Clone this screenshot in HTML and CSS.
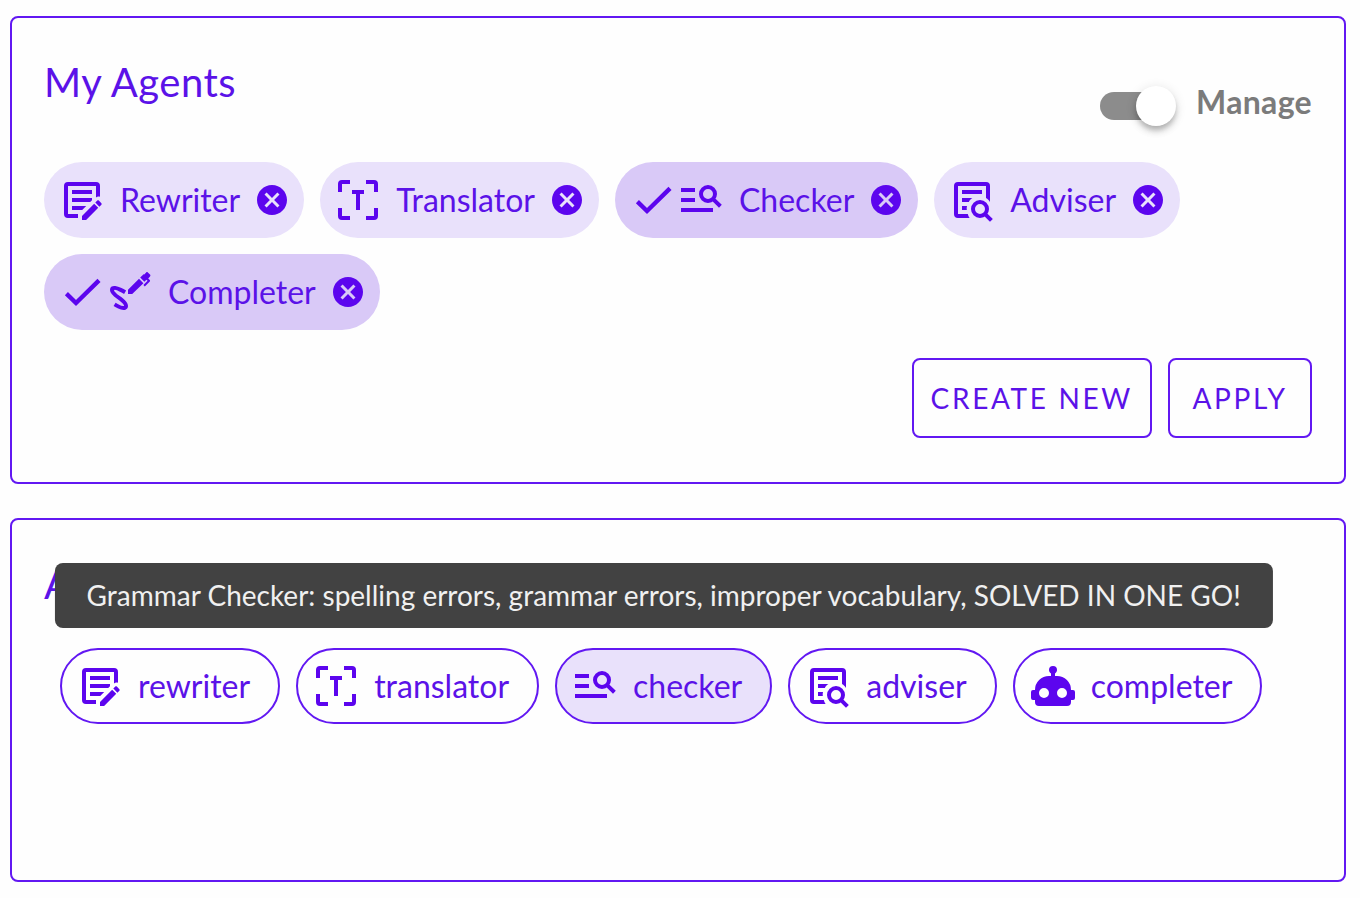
FILE: index.html
```html
<!DOCTYPE html>
<html lang="en">
<head>
<meta charset="utf-8">
<meta name="viewport" content="width=device-width, initial-scale=1">
<title>My Agents</title>
<link rel="stylesheet" href="styles.css">
</head>
<body>
<svg class="sprite" aria-hidden="true">
  <symbol id="rewrite" viewBox="0 0 24 24">
    <path fill="currentColor" d="M10 21H5a2 2 0 0 1-2-2V5a2 2 0 0 1 2-2h14a2 2 0 0 1 2 2v5.4c-.8-.3-1.5-.1-2 .4V5H5v14h5zM7 7h10v2H7zM7 11h10v1.1l-.9.9H7zM7 15h7.1l-2 2H7z"/>
    <path fill="currentColor" d="M21.7 14.35l-1 1-2.05-2.05 1-1c.21-.21.56-.21.77 0l1.28 1.28c.21.21.21.56 0 .77M12 19.94V22h2.06l6.06-6.12-2.05-2.05z"/>
  </symbol>
  <symbol id="translate" viewBox="0 0 24 24">
    <path fill="none" stroke="currentColor" stroke-width="2" d="M3 8V4a1 1 0 0 1 1-1h4M16 3h4a1 1 0 0 1 1 1v4M21 16v4a1 1 0 0 1-1 1h-4M8 21H4a1 1 0 0 1-1-1v-4M9 8h6M12 8v9"/>
  </symbol>
  <symbol id="check-text" viewBox="0 0 24 24">
    <g fill="none" stroke="currentColor" stroke-width="2">
      <path d="M2 7h7M2 12h7M2 17h16M17.8 11.3l3.9 3.8"/>
      <circle cx="15.5" cy="9" r="3.5"/>
    </g>
  </symbol>
  <symbol id="advise" viewBox="0 0 24 24">
    <path fill="currentColor" d="M10.8 21H5a2 2 0 0 1-2-2V5a2 2 0 0 1 2-2h14a2 2 0 0 1 2 2v8c-.5-.8-1.2-1.5-2-2V5H5v14h4.9c.2.8.5 1.4.9 2zM7 7h10v2H7zM7 11h5.2c-.8.5-1.4 1.2-1.8 2H7zM7 15h2.5c-.2.7-.2 1.3-.1 2H7z"/>
    <g fill="none" stroke="currentColor" stroke-width="2">
      <circle cx="16" cy="16.5" r="3.5"/>
      <path d="M18.4 18.900l3.300 3.300"/>
    </g>
  </symbol>
  <symbol id="draw" viewBox="0 0 24 24">
    <path fill="currentColor" d="M9.75 20.85c1.780-.700 1.390-2.630.490-3.850-.890-1.250-2.120-2.110-3.360-2.940C6 13.500 5.190 12.800 4.540 12c-.280-.330-.850-.940-.270-1.060.590-.120 1.610.460 2.130.680.910.380 1.810.820 2.650 1.340l1.010-1.700C8.500 10.230 6.500 9.320 4.640 9.050c-1.060-.160-2.180.060-2.540 1.210-.320.990.190 1.990.770 2.770 1.370 1.830 3.500 2.710 5.090 4.290.340.330.750.720.950 1.180.210.440.160.470-.310.470-1.240 0-2.790-.970-3.800-1.610l-1.010 1.700c1.530.940 4.090 2.410 5.960 1.790z"/>
    <path fill="currentColor" d="M11 13v-2.100l5.500-5.500 2.200 2.200L13.100 13zM17.100 4.800l1.700-1.700.3.100 1-1c.2-.2.600-.2.800 0l1.100 1.100c.3.300.3.600 0 .900l-.9 1 .8.800c.2.200.2.500 0 .7l-2.500 2.500-.7-.7 2.100-2.100-.6-.5-1 1z"/>
  </symbol>
  <symbol id="robot" viewBox="0 0 24 24">
    <path fill="currentColor" fill-rule="evenodd" d="M12 2a2 2 0 0 1 2 2c0 .74-.4 1.390-1 1.730V7h1a7 7 0 0 1 7 7h1a1 1 0 0 1 1 1v3a1 1 0 0 1-1 1h-1v1a2 2 0 0 1-2 2H5a2 2 0 0 1-2-2v-1H2a1 1 0 0 1-1-1v-3a1 1 0 0 1 1-1h1a7 7 0 0 1 7-7h1V5.730C10.400 5.390 10 4.740 10 4a2 2 0 0 1 2-2M7.500 13a2.500 2.500 0 1 0 0 5 2.500 2.500 0 0 0 0-5M16.500 13a2.500 2.500 0 1 0 0 5 2.500 2.500 0 0 0 0-5"/>
  </symbol>
  <symbol id="tick" viewBox="0 0 24 24">
    <path fill="none" stroke="currentColor" stroke-width="2.200" d="M4.200 12.800L9 17.500 20.500 6.200"/>
  </symbol>
  <symbol id="cancel" viewBox="0 0 24 24">
    <path fill="currentColor" d="M12 2C6.470 2 2 6.470 2 12s4.470 10 10 10 10-4.470 10-10S17.530 2 12 2zm5 13.590L15.590 17 12 13.410 8.410 17 7 15.590 10.590 12 7 8.410 8.410 7 12 10.590 15.590 7 17 8.410 13.410 12 17 15.590z"/>
  </symbol>
</svg>

<main class="page">
  <section class="panel">
    <header class="panel-head">
      <h2 class="title">My Agents</h2>
      <div class="manage">
        <input class="switch" type="checkbox" role="switch" id="manage" checked>
        <label class="manage-label" for="manage">Manage</label>
      </div>
    </header>
    <div class="chips">
      <div class="chip">
        <button class="chip-main" type="button"><svg class="icon"><use href="#rewrite"/></svg><span class="chip-text">Rewriter</span></button>
        <button class="remove" type="button" aria-label="Remove Rewriter"><svg class="icon-small"><use href="#cancel"/></svg></button>
      </div>
      <div class="chip">
        <button class="chip-main" type="button"><svg class="icon"><use href="#translate"/></svg><span class="chip-text">Translator</span></button>
        <button class="remove" type="button" aria-label="Remove Translator"><svg class="icon-small"><use href="#cancel"/></svg></button>
      </div>
      <div class="chip selected">
        <button class="chip-main" type="button" aria-pressed="true"><svg class="icon"><use href="#tick"/></svg><svg class="icon"><use href="#check-text"/></svg><span class="chip-text">Checker</span></button>
        <button class="remove" type="button" aria-label="Remove Checker"><svg class="icon-small"><use href="#cancel"/></svg></button>
      </div>
      <div class="chip">
        <button class="chip-main" type="button"><svg class="icon"><use href="#advise"/></svg><span class="chip-text">Adviser</span></button>
        <button class="remove" type="button" aria-label="Remove Adviser"><svg class="icon-small"><use href="#cancel"/></svg></button>
      </div>
      <div class="chip selected">
        <button class="chip-main" type="button" aria-pressed="true"><svg class="icon"><use href="#tick"/></svg><svg class="icon"><use href="#draw"/></svg><span class="chip-text">Completer</span></button>
        <button class="remove" type="button" aria-label="Remove Completer"><svg class="icon-small"><use href="#cancel"/></svg></button>
      </div>
    </div>
    <div class="actions">
      <button class="action" type="button">CREATE NEW</button>
      <button class="action" type="button">APPLY</button>
    </div>
  </section>

  <section class="panel panel-list">
    <h2 class="title">A</h2>
    <div class="chips chips-list">
      <button class="chip-outline" type="button"><svg class="icon"><use href="#rewrite"/></svg><span class="chip-text">rewriter</span></button>
      <button class="chip-outline" type="button"><svg class="icon"><use href="#translate"/></svg><span class="chip-text">translator</span></button>
      <div class="hinted">
        <button class="chip-outline hovered" type="button" aria-describedby="hint"><svg class="icon"><use href="#check-text"/></svg><span class="chip-text">checker</span></button>
        <div class="tooltip" id="hint" role="tooltip">Grammar Checker: spelling errors, grammar errors, improper vocabulary, SOLVED IN ONE GO!</div>
      </div>
      <button class="chip-outline" type="button"><svg class="icon"><use href="#advise"/></svg><span class="chip-text">adviser</span></button>
      <button class="chip-outline" type="button"><svg class="icon"><use href="#robot"/></svg><span class="chip-text">completer</span></button>
    </div>
  </section>
</main>
</body>
</html>
```
FILE: styles.css
```css
* {
  box-sizing: border-box;
}

body {
  margin: 0;
  background: #fefefe;
  color: #5b12e8;
  font-family: Lato, Carlito, sans-serif;
  font-size: 32px;
}

button {
  margin: 0;
  border: 0;
  padding: 0;
  background: none;
  color: inherit;
  font: inherit;
  cursor: pointer;
}

.sprite {
  display: none;
}

.page {
  display: flex;
  flex-direction: column;
  gap: 34px;
  padding: 16px 14px 16px 10px;
}

.panel {
  border: 2px solid #6218f2;
  border-radius: 8px;
  padding: 32px 32px 44px;
}

.panel-list {
  min-height: 364px;
}

.panel-head {
  display: flex;
  justify-content: space-between;
  align-items: flex-end;
  height: 96px;
  margin-bottom: 16px;
}

.title {
  align-self: flex-start;
  margin: 0;
  font-size: 40px;
  font-weight: 400;
  line-height: 64px;
  letter-spacing: 0.0125em;
}

.manage {
  display: flex;
  align-items: center;
  gap: 20px;
  height: 80px;
}

.manage-label {
  padding-bottom: 8px;
  color: #7b7b7b;
  font-weight: 700;
  line-height: 40px;
  letter-spacing: 0.01em;
}

.switch {
  appearance: none;
  display: flex;
  align-items: center;
  justify-content: flex-end;
  width: 76px;
  height: 28px;
  margin: 0;
  border-radius: 14px;
  background: linear-gradient(#8c8c8c, #8c8c8c) left / 64px no-repeat;
}

.switch::before {
  content: "";
  flex: none;
  width: 40px;
  height: 40px;
  border-radius: 50%;
  background: #fff;
  box-shadow: 0 6px 8px -2px rgba(0, 0, 0, 0.2), 0 4px 4px rgba(0, 0, 0, 0.1), 0 2px 12px rgba(0, 0, 0, 0.12);
}

.chips {
  display: flex;
  flex-wrap: wrap;
  gap: 16px;
}

.chips-list {
  margin-top: 32px;
  padding-left: 16px;
}

.chip {
  display: flex;
  align-items: center;
  gap: 14px;
  height: 76px;
  padding: 0 14px;
  border-radius: 38px;
  background: #e9e1fb;
}

.selected {
  background: #d9c9f7;
}

.chip-main {
  display: flex;
  align-items: center;
}

.icon {
  flex: none;
  width: 48px;
  height: 48px;
  color: #5c05ee;
}

.chip-text {
  margin-left: 14px;
  line-height: 40px;
}

.remove {
  display: flex;
}

.icon-small {
  width: 36px;
  height: 36px;
  color: #5c05ee;
}

.chip-outline {
  display: flex;
  align-items: center;
  height: 76px;
  padding: 0 28px 0 14px;
  border: 2px solid #6218f2;
  border-radius: 38px;
}

.hovered {
  background: #e9e1fb;
}

.hinted {
  position: relative;
}

.tooltip {
  position: absolute;
  bottom: calc(100% + 20px);
  left: 50%;
  transform: translateX(-50%);
  padding: 12px 32px 13px;
  border-radius: 8px;
  background: #424242;
  color: #f0f0f0;
  font-size: 28px;
  line-height: 40px;
  white-space: nowrap;
}

.actions {
  display: flex;
  justify-content: flex-end;
  gap: 16px;
  margin-top: 28px;
}

.action {
  min-width: 144px;
  height: 80px;
  padding: 0 17px;
  border: 2px solid #6218f2;
  border-radius: 8px;
  font-size: 28px;
  letter-spacing: 0.095em;
}
```
